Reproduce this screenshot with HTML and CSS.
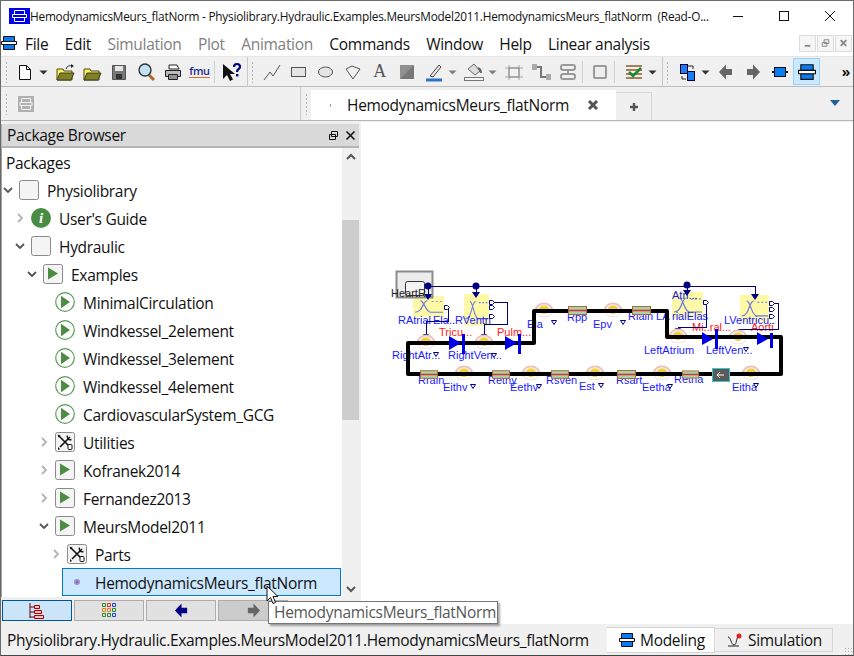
FILE: index.html
```html
<!DOCTYPE html>
<html>
<head>
  <meta charset="UTF-8">
  <title>HemodynamicsMeurs_flatNorm</title>
  <link rel="stylesheet" href="styles.css">
</head>
<body>
  <!-- shared icons -->
  <svg class="defs" width="0" height="0">
    <symbol id="i-diagram" viewBox="0 0 16 16">
      <path d="M2.500 1.500h11v5h-11zM2.500 9.500h11v5h-11z" fill="#0a7cf0" stroke="#111"/>
      <path d="M.5 6.500h15v3H.5z" fill="#fff" stroke="#111"/>
    </symbol>
    <symbol id="i-box" viewBox="0 0 20 20">
      <rect x=".5" y=".5" width="19" height="19" rx="2" fill="#f4f4f4" stroke="#8a8a8a"/>
    </symbol>
    <symbol id="i-pkgplay" viewBox="0 0 20 20">
      <rect x=".5" y=".5" width="19" height="19" rx="2" fill="#f4f4f4" stroke="#8a8a8a"/>
      <path d="M5 3.500l10 6-10 6z" fill="#4c8c43"/>
    </symbol>
    <symbol id="i-play" viewBox="0 0 20 20">
      <circle cx="10" cy="10" r="9.300" fill="#fff" stroke="#5d9c57" stroke-width="1.200"/>
      <path d="M6 3.800l9 6.200-9 6.200z" fill="#4c8c43"/>
    </symbol>
    <symbol id="i-tools" viewBox="0 0 20 20">
      <rect x=".5" y=".5" width="19" height="19" rx="2" fill="#f4f4f4" stroke="#8a8a8a"/>
      <path d="M4 4l11 11M15 5L5 15" stroke="#111" stroke-width="1.600"/>
      <path d="M12.500 3.500a3 3 0 0 0 4 4" fill="none" stroke="#111" stroke-width="1.400"/>
      <path d="M2.500 2.500l3 1-2 2z" fill="#111"/>
      <rect x="13" y="12.500" width="4" height="5" rx="1" fill="#fff" stroke="#111"/>
      <path d="M3 15l2 2-2 1z" fill="#111"/>
    </symbol>
    <symbol id="i-chev-d" viewBox="0 0 12 12">
      <path d="M2 4l4 4 4-4" fill="none" stroke="#555" stroke-width="1.800"/>
    </symbol>
    <symbol id="i-chev-r" viewBox="0 0 12 12">
      <path d="M4 2l4 4-4 4" fill="none" stroke="#b4b4b4" stroke-width="1.800"/>
    </symbol>
    <symbol id="i-drop" viewBox="0 0 12 24">
      <path d="M1.500 10.500h8l-4 4z" fill="#333"/>
    </symbol>
    <symbol id="i-folder" viewBox="0 0 24 24">
      <path d="M4 9h6l1 2h8v9H4z" fill="#f6ef6c" stroke="#4a4a10"/>
      <path d="M4 20l3-7h14l-3 7z" fill="#80802a" stroke="#3f3f10"/>
    </symbol>
    <symbol id="i-arrow-l" viewBox="0 0 16 16">
      <path d="M1 8l7-7.500V5h6v6H8v4.500z"/>
    </symbol>
    <symbol id="i-arrow-r" viewBox="0 0 16 16">
      <path d="M15 8L8 .5V5H2v6h6v4.500z"/>
    </symbol>
    <symbol id="i-pad" viewBox="0 0 20 15">
      <path d="M.5 9a9.500 8.500 0 0 1 19 0z" fill="#e8c4b8"/>
      <path d="M2.500 9a7.500 6.800 0 0 1 15 0z" fill="#fbefe9"/>
      <path d="M4 9a6 5.300 0 0 1 12 0z" fill="#e8c4b8"/>
      <path d="M5.500 9a4.500 3.800 0 0 1 9 0z" fill="#fbefe9"/>
      <path d="M6 8a4 4 0 0 0 8 0v-1.500a4 3 0 0 0-8 0z" fill="#f2d02e"/>
      <path d="M3 11a7 4 0 0 0 14 0" fill="none" stroke="#f0dcd2"/>
    </symbol>
    <symbol id="i-res" viewBox="0 0 19 9">
      <rect x=".5" y=".5" width="18" height="8" fill="#a9d3a4" stroke="#a86a3c"/>
      <path d="M1 4.500h17" stroke="#d8303a" stroke-width="1.600"/>
    </symbol>
    <symbol id="i-curve" viewBox="0 0 30 26" preserveAspectRatio="none">
      <rect width="30" height="26" fill="#fdf9a6"/>
      <path d="M2 20c8 0 7-14 12-14M7 6c4 0 5 14 10 14h12" fill="none" stroke="#6a78e0" stroke-width="1.200"/>
      <path d="M18 7h2M22 7h2M26 7h2" stroke="#6a78e0"/>
    </symbol>
    <symbol id="i-tri" viewBox="0 0 6 5">
      <path d="M.5.500h5L3 4.500z" fill="#fff" stroke="#000080"/>
    </symbol>
    <symbol id="i-out" viewBox="0 0 6 5">
      <path d="M.5.500h3l2 2-2 2h-3z" fill="#fff" stroke="#000080"/>
    </symbol>
  </svg>

  <div class="window">
    <div class="titlebar">
      <svg class="app-icon" width="21" height="16" viewBox="0 0 21 16">
        <rect width="21" height="16" fill="#0000e6"/>
        <path d="M5.500 2.500h10v4h-10zM5.500 9.500h10v4h-10zM3.500 6.500h14v3h-14z" fill="none" stroke="#fff"/>
      </svg>
      <span class="title-text">HemodynamicsMeurs_flatNorm - Physiolibrary.Hydraulic.Examples.MeursModel2011.HemodynamicsMeurs_flatNorm  (Read-O...</span>
      <div class="win-buttons">
        <svg width="46" height="30" viewBox="0 0 46 30"><path d="M18 15.500h10" stroke="#111"/></svg>
        <svg width="46" height="30" viewBox="0 0 46 30"><rect x="18.500" y="10.500" width="9" height="9" fill="none" stroke="#111"/></svg>
        <svg width="46" height="30" viewBox="0 0 46 30"><path d="M18 10l10 10M28 10L18 20" stroke="#111"/></svg>
      </div>
    </div>

    <div class="menubar">
      <svg class="menu-icon" width="16" height="16"><use href="#i-diagram"/></svg>
      <span class="menu-item">File</span>
      <span class="menu-item">Edit</span>
      <span class="menu-item off">Simulation</span>
      <span class="menu-item off">Plot</span>
      <span class="menu-item off">Animation</span>
      <span class="menu-item">Commands</span>
      <span class="menu-item">Window</span>
      <span class="menu-item">Help</span>
      <span class="menu-item">Linear analysis</span>
      <div class="mdi-buttons">
        <span class="mdi-btn"><svg width="16" height="16" viewBox="0 0 16 16"><path d="M5 11h6" stroke="#888" stroke-width="2"/></svg></span>
        <span class="mdi-btn"><svg width="16" height="16" viewBox="0 0 16 16"><path d="M6.500 4.500h5v4h-5zM4.500 7.500h5v4h-5z" fill="#eee" stroke="#888"/></svg></span>
        <span class="mdi-btn"><svg width="16" height="16" viewBox="0 0 16 16"><path d="M5 5l6 6M11 5l-6 6" stroke="#888" stroke-width="2"/></svg></span>
      </div>
    </div>

    <div class="toolbar">
      <span class="handle"></span>
      <span class="spacer-left"></span>
      <span class="tb"><svg width="24" height="24" viewBox="0 0 24 24"><path d="M6.500 5.500h7l4 4v10h-11z" fill="#fff" stroke="#111"/><path d="M13.500 5.500v4h4" fill="none" stroke="#111"/></svg></span>
      <span class="tb-drop"><svg width="12" height="24"><use href="#i-drop"/></svg></span>
      <span class="tb"><svg width="24" height="24" viewBox="0 0 24 24"><use href="#i-folder"/><path d="M13 9c1-3 4-4 6-3" fill="none" stroke="#222"/><path d="M18 4l3 2-3 2z" fill="#222"/></svg></span>
      <span class="tb"><svg width="24" height="24"><use href="#i-folder"/></svg></span>
      <span class="tb"><svg width="24" height="24" viewBox="0 0 24 24"><path d="M5.500 5.500h13v14h-13z" fill="#777" stroke="#555"/><path d="M8 6h8v5H8z" fill="#e6e6e6"/><path d="M9 14h6v5H9z" fill="#333"/></svg></span>
      <span class="tb"><svg width="24" height="24" viewBox="0 0 24 24"><path d="M15 15l5 5" stroke="#b0662a" stroke-width="3"/><circle cx="11" cy="10" r="6" fill="#bfe2f5" stroke="#333" stroke-width="1.400"/></svg></span>
      <span class="tb"><svg width="24" height="24" viewBox="0 0 24 24"><path d="M8 5h8l2 4H8z" fill="#fff" stroke="#222"/><path d="M4.500 10.500h15v6h-15z" fill="#bbb" stroke="#222"/><path d="M7.500 14.500h9v5h-9z" fill="#fff" stroke="#222"/><path d="M8 16h8M8 18h8" stroke="#222"/></svg></span>
      <span class="tb"><span class="fmu">fmu</span></span>
      <span class="tb-sep"></span>
      <span class="tb"><svg width="24" height="24" viewBox="0 0 24 24"><path d="M3 4v15l4-4 3 6 3-1.500-3-5.500h5z" fill="#111"/><path d="M14 7c0-4 6-4 6 0 0 2-3 2-3 5" fill="none" stroke="#00007a" stroke-width="2.200"/><path d="M16 14h2.400v2.400H16z" fill="#00007a"/></svg></span>
      <span class="group-end"></span>
      <span class="handle"></span>
      <span class="tb"><svg width="24" height="24" viewBox="0 0 24 24"><path d="M4 20l6-8 3 4 7-11" fill="none" stroke="#555"/></svg></span>
      <span class="tb"><svg width="24" height="24" viewBox="0 0 24 24"><rect x="4.500" y="7.500" width="14" height="9" fill="#e4e4e4" stroke="#555"/></svg></span>
      <span class="tb"><svg width="24" height="24" viewBox="0 0 24 24"><ellipse cx="11.500" cy="12" rx="7" ry="5" fill="#e4e4e4" stroke="#555"/></svg></span>
      <span class="tb"><svg width="24" height="24" viewBox="0 0 24 24"><path d="M5 9l6-3 8 3-7 10z" fill="#f0f0f0" stroke="#555"/></svg></span>
      <span class="tb tb-letter">A</span>
      <span class="tb"><svg width="24" height="24" viewBox="0 0 24 24"><rect x="5" y="5" width="14" height="14" fill="#777"/><path d="M5 5h14L5 19z" fill="#909090"/></svg></span>
      <span class="tb"><svg width="24" height="24" viewBox="0 0 24 24"><path d="M8 16l9-11 2 2-8 10z" fill="#e8e8e8" stroke="#444"/><path d="M4 20h16" stroke="#2a6fc9" stroke-width="3"/></svg></span>
      <span class="tb-drop"><svg width="12" height="24"><use href="#i-drop" opacity=".6"/></svg></span>
      <span class="tb"><svg width="24" height="24" viewBox="0 0 24 24"><path d="M6 9l6-5 6 7-5 4z" fill="#ddd" stroke="#666"/><path d="M16 8c2 1 3 3 3 5" fill="none" stroke="#666" stroke-width="2"/><rect x="2.500" y="17.500" width="19" height="3" fill="#f4f4f4" stroke="#777"/></svg></span>
      <span class="tb-drop"><svg width="12" height="24"><use href="#i-drop" opacity=".6"/></svg></span>
      <span class="tb"><svg width="24" height="24" viewBox="0 0 24 24"><path d="M7 5v15M17 5v15M3 8h18M3 17h18" stroke="#a8a8a8"/><rect x="7" y="8" width="10" height="9" fill="none" stroke="#888"/></svg></span>
      <span class="tb"><svg width="24" height="24" viewBox="0 0 24 24"><path d="M7 7h5v10h7" fill="none" stroke="#777" stroke-width="2"/><rect x="3" y="4" width="5" height="6" fill="#aaa"/><rect x="17" y="14" width="5" height="6" fill="#aaa"/></svg></span>
      <span class="tb"><svg width="24" height="24" viewBox="0 0 24 24"><rect x="5" y="5" width="14" height="5" rx="2" fill="none" stroke="#999" stroke-width="2"/><rect x="5" y="14" width="14" height="5" rx="2" fill="none" stroke="#999" stroke-width="2"/><path d="M12 10v4" stroke="#999" stroke-width="2"/></svg></span>
      <span class="tb-sep"></span>
      <span class="tb"><svg width="24" height="24" viewBox="0 0 24 24"><rect x="6" y="6" width="12" height="12" rx="1" fill="#eee" stroke="#999" stroke-width="2"/></svg></span>
      <span class="tb-sep"></span>
      <span class="tb tb-gap"><svg width="24" height="24" viewBox="0 0 24 24"><path d="M4 6h16M4 10h16M4 14h16M4 18h16" stroke="#8a5a2a" stroke-width="1.500"/><path d="M7 12l4 4 8-8" fill="none" stroke="#1b8a2a" stroke-width="2.500"/></svg></span>
      <span class="tb-drop"><svg width="12" height="24"><use href="#i-drop"/></svg></span>
      <span class="group-end"></span>
      <span class="handle"></span>
      <span class="tb"><svg width="24" height="24" viewBox="0 0 24 24"><rect x="5.500" y="4.500" width="7" height="9" fill="#1a7cf0" stroke="#003"/><rect x="12.500" y="11.500" width="7" height="9" fill="#1a7cf0" stroke="#003"/><path d="M13 6h5v3M11 19H7v-3" fill="none" stroke="#222"/></svg></span>
      <span class="tb-drop tight"><svg width="12" height="24"><use href="#i-drop"/></svg></span>
      <span class="tb tb-grey"><svg width="16" height="16"><use href="#i-arrow-l"/></svg></span>
      <span class="tb tb-grey"><svg width="16" height="16"><use href="#i-arrow-r"/></svg></span>
      <span class="tb"><svg width="24" height="24" viewBox="0 0 24 24"><rect x="6.500" y="7.500" width="11" height="9" fill="#0a7cf0" stroke="#111"/><path d="M4 12h2M18 12h2" stroke="#111" stroke-width="2"/></svg></span>
      <span class="tb tb-on"><svg width="18" height="18"><use href="#i-diagram"/></svg></span>
      <span class="tb-more">»</span>
    </div>

    <div class="tabbar">
      <div class="tabbar-left">
        <span class="handle"></span>
        <svg width="16" height="16" viewBox="0 0 16 16"><rect width="16" height="16" fill="#b0b0b0"/><path d="M3.500 2.500h9v4h-9zM3.500 9.500h9v4h-9zM2 6.500h12v3H2z" fill="none" stroke="#f2f2f2"/></svg>
      </div>
      <div class="tabbar-right">
        <span class="handle"></span>
        <div class="tab">
          <span class="tab-dot"></span>
          <span class="tab-name">HemodynamicsMeurs_flatNorm</span>
          <svg width="12" height="12" viewBox="0 0 12 12"><path d="M2 2l8 8M10 2l-8 8" stroke="#555" stroke-width="3"/></svg>
        </div>
        <div class="tab-add"><svg width="10" height="10" viewBox="0 0 10 10"><path d="M5 1v8M1 5h8" stroke="#555" stroke-width="2.400"/></svg></div>
        <svg class="tab-menu" width="10" height="6" viewBox="0 0 10 6"><path d="M0 0h10L5 6z" fill="#1f5f9e"/></svg>
      </div>
    </div>

    <div class="main">
      <div class="browser">
        <div class="browser-head">
          <span>Package Browser</span>
          <svg width="11" height="11" viewBox="0 0 11 11"><path d="M3.500 1.500h6v5h-6zM1.500 4.500h6v5h-6z" fill="#d9d9d9" stroke="#111"/></svg>
          <svg width="11" height="11" viewBox="0 0 11 11"><path d="M1.500 1.500l8 8M9.500 1.500l-8 8" stroke="#111" stroke-width="1.600"/></svg>
        </div>
        <div class="browser-body">
          <div class="tree">
            <div class="tree-head">Packages</div>
            <div class="row d0"><svg class="chev" width="12" height="12"><use href="#i-chev-d"/></svg><svg width="20" height="20"><use href="#i-box"/></svg><span>Physiolibrary</span></div>
            <div class="row d1"><svg class="chev" width="12" height="12"><use href="#i-chev-r"/></svg><svg width="20" height="20" viewBox="0 0 20 20"><circle cx="10" cy="10" r="10" fill="#4a8c44"/><text x="10" y="15" class="info-i">i</text></svg><span>User's Guide</span></div>
            <div class="row d1"><svg class="chev" width="12" height="12"><use href="#i-chev-d"/></svg><svg width="20" height="20"><use href="#i-box"/></svg><span>Hydraulic</span></div>
            <div class="row d2"><svg class="chev" width="12" height="12"><use href="#i-chev-d"/></svg><svg width="20" height="20"><use href="#i-pkgplay"/></svg><span>Examples</span></div>
            <div class="row d3"><span class="chev"></span><svg width="20" height="20"><use href="#i-play"/></svg><span>MinimalCirculation</span></div>
            <div class="row d3"><span class="chev"></span><svg width="20" height="20"><use href="#i-play"/></svg><span>Windkessel_2element</span></div>
            <div class="row d3"><span class="chev"></span><svg width="20" height="20"><use href="#i-play"/></svg><span>Windkessel_3element</span></div>
            <div class="row d3"><span class="chev"></span><svg width="20" height="20"><use href="#i-play"/></svg><span>Windkessel_4element</span></div>
            <div class="row d3"><span class="chev"></span><svg width="20" height="20"><use href="#i-play"/></svg><span>CardiovascularSystem_GCG</span></div>
            <div class="row d3"><svg class="chev" width="12" height="12"><use href="#i-chev-r"/></svg><svg width="20" height="20"><use href="#i-tools"/></svg><span>Utilities</span></div>
            <div class="row d3"><svg class="chev" width="12" height="12"><use href="#i-chev-r"/></svg><svg width="20" height="20"><use href="#i-pkgplay"/></svg><span>Kofranek2014</span></div>
            <div class="row d3"><svg class="chev" width="12" height="12"><use href="#i-chev-r"/></svg><svg width="20" height="20"><use href="#i-pkgplay"/></svg><span>Fernandez2013</span></div>
            <div class="row d3"><svg class="chev" width="12" height="12"><use href="#i-chev-d"/></svg><svg width="20" height="20"><use href="#i-pkgplay"/></svg><span>MeursModel2011</span></div>
            <div class="row d4"><svg class="chev" width="12" height="12"><use href="#i-chev-r"/></svg><svg width="20" height="20"><use href="#i-tools"/></svg><span>Parts</span></div>
            <div class="row-selected"><svg width="20" height="20" viewBox="0 0 20 20"><circle cx="10" cy="10" r="3" fill="#8c94dc"/><circle cx="10" cy="10" r="1.200" fill="#d04a7a"/></svg><span>HemodynamicsMeurs_flatNorm</span></div>
          </div>
          <div class="scrollbar">
            <svg width="16" height="16" viewBox="0 0 16 16"><path d="M4 10l4-4 4 4" fill="none" stroke="#555" stroke-width="2"/></svg>
            <div class="scroll-track"><div class="scroll-thumb"></div></div>
            <svg width="16" height="16" viewBox="0 0 16 16"><path d="M4 6l4 4 4-4" fill="none" stroke="#555" stroke-width="2"/></svg>
          </div>
        </div>
        <div class="browser-foot">
          <span class="foot-btn on"><svg width="20" height="18" viewBox="0 0 20 18"><path d="M3 1v15M3 5h4M3 10h4M3 15h4" stroke="#600" fill="none"/><path d="M7.500 3.500h5v3h-5zM7.500 8.500h7v3h-7zM7.500 13.500h9v3h-9z" fill="#f4c4c4" stroke="#a00"/></svg></span>
          <span class="foot-btn"><svg width="15" height="15" viewBox="0 0 15 15"><path d="M.5.500h3v3h-3z" fill="none" stroke="#2a8a2a"/><path d="M5.500.500h3v3h-3z" fill="none" stroke="#e03030"/><path d="M10.500.500h3v3h-3z" fill="none" stroke="#2040e0"/><path d="M.5 5.500h3v3h-3z" fill="none" stroke="#e08020"/><path d="M5.500 5.500h3v3h-3z" fill="none" stroke="#e08020"/><path d="M10.500 5.500h3v3h-3z" fill="none" stroke="#2a8a2a"/><path d="M.5 10.500h3v3h-3z" fill="none" stroke="#2a8a2a"/><path d="M5.500 10.500h3v3h-3z" fill="none" stroke="#2a8a2a"/><path d="M10.500 10.500h3v3h-3z" fill="none" stroke="#2040e0"/></svg></span>
          <span class="foot-btn back"><svg width="15" height="15"><use href="#i-arrow-l"/></svg></span>
          <span class="foot-btn dim"><svg width="15" height="15"><use href="#i-arrow-r"/></svg></span>
        </div>
      </div>

      <div class="canvas">
        <svg class="diagram" width="493" height="504" viewBox="361 121 493 504">
          <!-- elastance blocks -->
          <use href="#i-curve" x="413" y="295" width="31" height="21"/>
          <use href="#i-curve" x="464" y="293" width="25" height="32"/>
          <use href="#i-curve" x="672" y="291" width="31" height="26"/>
          <use href="#i-curve" x="740" y="294" width="29" height="27"/>

          <!-- labels sit under the wires -->
          <g class="lbl-red">
            <text x="439" y="335">Tricu...</text><text x="497" y="335">Pulm...</text>
            <text x="692" y="330">Mi..ral...</text><text x="751" y="330">Aorti</text>
          </g>
          <g class="lbl">
            <text x="398" y="323">RAtrial</text><text x="433" y="323">Ela..</text><text x="452" y="323">.RVentri</text>
            <text x="527" y="327">Ela</text><text x="567" y="320">Rpp</text>
            <text x="392" y="358">RightAtr...</text><text x="448" y="358">RightVen...</text>
            <text x="418" y="383">Rrain</text><text x="443" y="390">Eithv</text>
            <text x="488" y="383">Rethy</text><text x="510" y="390">Eethv</text>
            <text x="546" y="383">Rsven</text><text x="579" y="389">Est</text>
            <text x="593" y="327">Epv</text><text x="628" y="319">Rlain LA</text>
            <text x="672" y="298">Atri...</text><text x="672" y="319">rialElas</text>
            <text x="724" y="323">LVentricu..</text>
            <text x="644" y="353">LeftAtrium</text><text x="706" y="353">LeftVen...</text>
            <text x="616" y="383">Rsart</text><text x="642" y="390">Eetha</text>
            <text x="674" y="382">Retha</text><text x="732" y="390">Eitha</text>
          </g>

          <!-- heart rate source -->
          <rect class="hr-box" x="396.500" y="270.500" width="36" height="26"/>
          <rect class="hr-inner" x="405.500" y="280.500" width="19" height="14" rx="2"/>
          <text class="hr-label" x="391" y="296">HeartR..</text>

          <!-- signal lines -->
          <path class="sig" d="M428 285H755V295M428 285V295M476 285V293M687 285V292"/>
          <path class="sig" d="M444 306H448V320H426V335M489 301H507V323H484V335M703 300H706V326H678V330M769 302H778V328H738V332"/>
          <circle class="node" cx="428" cy="285" r="3.500"/>
          <circle class="node" cx="476" cy="285" r="3.500"/>
          <circle class="node" cx="687" cy="284" r="3.500"/>
          <path class="node" d="M424 293h8l-4 6zM472 291h8l-4 6zM683 289h8l-4 6zM751 293h8l-4 6zM423 333h6l-3 4zM481 333h6l-3 4zM675 327h6l-3 4zM735 329h6l-3 4z"/>
          <use href="#i-out" x="444" y="304" width="6" height="5"/>
          <use href="#i-out" x="489" y="299" width="6" height="5"/>
          <use href="#i-out" x="489" y="304" width="6" height="5"/>
          <use href="#i-out" x="489" y="313" width="6" height="5"/>
          <use href="#i-out" x="703" y="299" width="6" height="5"/>
          <use href="#i-out" x="769" y="300" width="6" height="5"/>
          <use href="#i-out" x="769" y="306" width="6" height="5"/>
          <use href="#i-out" x="769" y="313" width="6" height="5"/>

          <!-- pressure chambers -->
          <use href="#i-pad" x="416" y="333" width="20" height="15"/>
          <use href="#i-pad" x="474" y="333" width="20" height="15"/>
          <use href="#i-pad" x="534" y="301" width="20" height="15"/>
          <use href="#i-pad" x="603" y="301" width="20" height="15"/>
          <use href="#i-pad" x="668" y="327" width="20" height="15"/>
          <use href="#i-pad" x="728" y="328" width="20" height="15"/>
          <use href="#i-pad" x="454" y="364" width="20" height="15"/>
          <use href="#i-pad" x="521" y="364" width="20" height="15"/>
          <use href="#i-pad" x="585" y="364" width="20" height="15"/>
          <use href="#i-pad" x="652" y="364" width="20" height="15"/>
          <use href="#i-pad" x="741" y="364" width="20" height="15"/>

          <!-- main flow line -->
          <path class="flow" d="M408 373V342H534V310H667V336H781V373Z"/>

          <!-- resistors and valves -->
          <use href="#i-res" x="420" y="369" width="18" height="9"/>
          <use href="#i-res" x="492" y="369" width="18" height="9"/>
          <use href="#i-res" x="551" y="369" width="18" height="9"/>
          <use href="#i-res" x="568" y="305" width="19" height="9"/>
          <use href="#i-res" x="632" y="305" width="19" height="9"/>
          <use href="#i-res" x="617" y="369" width="19" height="9"/>
          <use href="#i-res" x="682" y="369" width="17" height="9"/>
          <path class="valve" d="M449 335l12 7-12 7zM505 335l12 7-12 7zM702 331l11 7-11 6zM757 331l11 7-11 6z"/>
          <rect class="valve" x="462" y="333" width="3" height="20"/>
          <rect class="valve" x="518" y="333" width="3" height="20"/>
          <rect class="valve" x="715" y="328" width="3" height="20"/>
          <rect class="valve" x="770" y="332" width="3" height="15"/>
          <rect class="backflow" x="712.500" y="367.500" width="17" height="13"/>
          <path d="M724 374h-7m3-3l-3 3 3 3" fill="none" stroke="#fff"/>

          <!-- connector triangles -->
          <use href="#i-tri" x="433" y="351" width="6" height="5"/>
          <use href="#i-tri" x="491" y="352" width="6" height="5"/>
          <use href="#i-tri" x="551" y="319" width="6" height="5"/>
          <use href="#i-tri" x="620" y="319" width="6" height="5"/>
          <use href="#i-tri" x="470" y="383" width="6" height="5"/>
          <use href="#i-tri" x="536" y="383" width="6" height="5"/>
          <use href="#i-tri" x="598" y="382" width="6" height="5"/>
          <use href="#i-tri" x="667" y="383" width="6" height="5"/>
          <use href="#i-tri" x="753" y="382" width="6" height="5"/>
          <use href="#i-tri" x="743" y="346" width="6" height="5"/>
        </svg>
      </div>
    </div>

    <div class="statusbar">
      <span class="status-text">Physiolibrary.Hydraulic.Examples.MeursModel2011.HemodynamicsMeurs_flatNorm</span>
      <div class="mode-tab active"><svg width="16" height="16"><use href="#i-diagram"/></svg>Modeling</div>
      <div class="mode-tab"><svg width="16" height="16" viewBox="0 0 16 16"><path d="M1 5c3 0 3 8 6 8s2-8 5-9" fill="none" stroke="#222"/><path d="M1 14h11" stroke="#222"/><circle cx="12" cy="4" r="2.500" fill="#e02020"/></svg>Simulation</div>
      <span class="grip"></span>
    </div>

    <!-- things floating over the window -->
    <div class="tooltip">HemodynamicsMeurs_flatNorm</div>
    <svg class="cursor" width="14" height="20" viewBox="0 0 14 20"><path d="M1 1v15l3.500-3.500 2.500 6 2.500-1-2.500-6H12z" fill="#fff" stroke="#111"/></svg>
  </div>
</body>
</html>
```

FILE: styles.css
```css
* {
  box-sizing: border-box;
}
html, body {
  margin: 0;
  padding: 0;
}
body {
  font-family: "Open Sans", "Noto Sans", sans-serif;
  font-size: 15.500px;
  letter-spacing: -0.3px;
  color: #111;
  overflow: hidden;
}
.defs {
  position: absolute;
}
.window {
  position: relative;
  width: 854px;
  height: 656px;
  display: flex;
  flex-direction: column;
  background-color: #f0f0f0;
  border: 1px solid #6a6a6a;
  border-bottom-color: #444;
  overflow: hidden;
}

/* title and menu */
.titlebar {
  height: 29px;
  flex: none;
  display: flex;
  align-items: center;
  padding-left: 8px;
  background-color: #fff;
}
.app-icon {
  flex: none;
}
.title-text {
  font-size: 11.800px;
  letter-spacing: -0.22px;
  white-space: pre;
}
.win-buttons {
  margin-left: auto;
  display: flex;
  flex: none;
}
.menubar {
  height: 26px;
  flex: none;
  display: flex;
  align-items: center;
  background-color: #fff;
}
.menu-icon {
  flex: none;
}
.menu-item {
  margin-left: 16.400px;
  padding-top: 2px;
}
.menu-icon + .menu-item {
  margin-left: 8px;
}
.menu-item.off {
  color: #808080;
}
.mdi-buttons {
  margin-left: auto;
  margin-right: 1px;
  display: flex;
  gap: 1px;
}
.mdi-btn {
  width: 17px;
  height: 17px;
  display: flex;
  align-items: center;
  justify-content: center;
  background-color: #f6f6f6;
  border: 1px solid #dcdcdc;
}

/* toolbars */
.toolbar {
  height: 31px;
  flex: none;
  display: flex;
  align-items: center;
  padding-left: 4px;
  border-bottom: 1px solid #bdbdbd;
  border-top: 1px solid #e6e6e6;
}
.handle {
  width: 3px;
  height: 22px;
  flex: none;
  background-image: radial-gradient(#b0b0b0 1px, transparent 1px);
  background-size: 3px 4px;
}
.spacer-left {
  width: 3px;
}
.tb {
  width: 27px;
  height: 27px;
  flex: none;
  display: flex;
  align-items: center;
  justify-content: center;
}
.tb-gap {
  margin-left: 2px;
}
.tb-grey {
  fill: #666;
}
.tb-drop {
  width: 12px;
  height: 24px;
  flex: none;
  margin-right: 1px;
}
.tb-drop.tight {
  margin-right: 0;
}
.tb-sep {
  width: 3px;
  height: 22px;
  flex: none;
  margin: 0 1px;
  border-left: 1px solid #d2d2d2;
}
.group-end {
  width: 1px;
  height: 30px;
  flex: none;
  margin: 0 3px 0 2px;
  background-color: #c8c8c8;
}
.group-end + .handle {
  margin-right: 4px;
}
.tb-on {
  background-color: #cce8ff;
  border: 1px solid #99d1ff;
}
.tb-letter {
  font-family: "Liberation Serif", serif;
  font-size: 18px;
  color: #555;
}
.tb-more {
  margin-left: auto;
  margin-right: 3px;
  font-size: 14px;
  font-weight: 700;
}
.fmu {
  font-size: 11px;
  font-weight: 600;
  color: #1c2a8c;
  border-bottom: 1px solid #d8702a;
  line-height: 10px;
  padding-bottom: 1px;
}
.tabbar {
  height: 34px;
  flex: none;
  display: flex;
  border-bottom: 1px solid #b5b5b5;
}
.tabbar-left {
  width: 300px;
  flex: none;
  display: flex;
  align-items: center;
  gap: 10px;
  padding-left: 4px;
  border-right: 1px solid #c8c8c8;
}
.tabbar-right {
  flex: 1;
  display: flex;
  align-items: flex-end;
  padding-left: 4px;
  position: relative;
}
.tabbar-right .handle {
  align-self: center;
  margin-right: 3px;
}
.tab {
  width: 305px;
  height: 30px;
  display: flex;
  align-items: center;
  padding-right: 17px;
  background-color: #fff;
}
.tab-dot {
  width: 1px;
  height: 3px;
  margin-left: 19px;
  margin-right: 16px;
  background-color: #b08ab0;
}
.tab-name {
  flex: 1;
}
.tab-add {
  width: 36px;
  height: 28px;
  display: flex;
  align-items: center;
  justify-content: center;
  border-top: 1px solid #d8d8d8;
  border-right: 1px solid #d8d8d8;
}
.tab-menu {
  position: absolute;
  right: 13px;
  top: 13px;
}

/* main area */
.main {
  flex: 1;
  min-height: 0;
  display: flex;
  padding-top: 1px;
}
.browser {
  width: 358px;
  flex: none;
  display: flex;
  flex-direction: column;
  margin-top: 2px;
  margin-right: 2px;
}
.browser-head {
  height: 24px;
  flex: none;
  display: flex;
  align-items: center;
  gap: 6px;
  padding: 0 3px 0 5px;
  background-color: #d9d9d9;
  border-bottom: 2px solid #b4b4b4;
  border-left: 1px solid #b4b4b4;
}
.browser-head span {
  flex: 1;
}
.browser-body {
  flex: 1;
  min-height: 0;
  display: flex;
  background-color: #fff;
  border-left: 1px solid #a0a0a0;
}
.tree {
  flex: 1;
  min-width: 0;
}
.tree-head {
  height: 28px;
  line-height: 30px;
  padding-left: 4px;
}
.row {
  height: 28px;
  display: flex;
  align-items: center;
}
.row svg {
  flex: none;
}
.chev {
  width: 12px;
  flex: none;
  margin-right: 5px;
}
.row span:last-child {
  margin-left: 8px;
  padding-top: 2px;
}
.d0 { padding-left: 0; }
.d1 { padding-left: 12px; }
.d2 { padding-left: 24px; }
.d3 { padding-left: 36px; }
.d4 { padding-left: 48px; }
.row-selected {
  height: 28px;
  margin-left: 60px;
  margin-right: 1px;
  display: flex;
  align-items: center;
  padding-left: 4px;
  background-color: #cce8ff;
  border: 1px solid #0078d7;
}
.row-selected span {
  margin-left: 8px;
  padding-top: 2px;
}
.scrollbar {
  width: 17px;
  flex: none;
  display: flex;
  flex-direction: column;
  align-items: center;
  padding-top: 1px;
  background-color: #f0f0f0;
}
.scroll-track {
  flex: 1;
  width: 100%;
  padding-top: 55px;
}
.scroll-thumb {
  height: 200px;
  background-color: #cdcdcd;
}
.browser-foot {
  height: 27px;
  flex: none;
  display: flex;
  gap: 2px;
  align-items: center;
  padding-left: 1px;
}
.foot-btn {
  width: 70px;
  height: 21px;
  display: flex;
  align-items: center;
  justify-content: center;
  background-color: #e1e1e1;
  border: 1px solid #adadad;
}
.foot-btn.on {
  background-color: #cce4f7;
  border-color: #005499;
}
.foot-btn.back {
  fill: #000080;
}
.foot-btn.dim {
  fill: #666;
  background-color: #cccccc;
}
.canvas {
  flex: 1;
  min-width: 0;
  background-color: #fff;
}
.diagram {
  display: block;
}

/* diagram */
.diagram text {
  font-family: "Liberation Sans", Arial, sans-serif;
  font-size: 11px;
  letter-spacing: 0;
}
.lbl text {
  fill: #1a1aff;
}
.lbl-red text {
  fill: #ff2020;
}
.hr-box {
  fill: #ececec;
  stroke: #8c8c8c;
  stroke-width: 2;
}
.hr-inner {
  fill: #f4f4f4;
  stroke: #333;
}
.diagram .hr-label {
  fill: #222;
}
.sig {
  fill: none;
  stroke: #000080;
  stroke-width: 1;
  shape-rendering: crispEdges;
}
.node {
  fill: #000080;
}
.flow {
  fill: none;
  stroke: #000;
  stroke-width: 4;
  stroke-linejoin: round;
}
.valve {
  fill: #0000e6;
}
.backflow {
  fill: #5a5a5a;
  stroke: #36c8d0;
}
.info-i {
  fill: #fff;
  font-family: "Liberation Serif", serif;
  font-size: 15px;
  font-style: italic;
  font-weight: 700;
  text-anchor: middle;
}

/* status bar */
.statusbar {
  height: 31px;
  flex: none;
  display: flex;
  align-items: center;
  padding-left: 6px;
}
.status-text {
  width: 600px;
  flex: none;
  white-space: nowrap;
}
.mode-tab {
  width: 118px;
  height: 24px;
  flex: none;
  display: flex;
  align-items: center;
  gap: 5px;
  padding-left: 12px;
  border: 1px solid #d6d6d6;
  border-left: none;
}
.mode-tab.active {
  width: 108px;
  height: 26px;
  background-color: #fff;
}
.grip {
  width: 8px;
  height: 8px;
  margin-left: auto;
  margin-right: 1px;
  align-self: flex-end;
  background-image: radial-gradient(#b0b0b0 1px, transparent 1px);
  background-size: 3px 3px;
}

/* overlays */
.tooltip {
  position: absolute;
  left: 267px;
  top: 600px;
  width: 230px;
  height: 23px;
  padding-left: 5px;
  line-height: 21px;
  color: #575757;
  background-color: #fff;
  border: 1px solid #767676;
  box-shadow: 2px 2px 2px rgba(0, 0, 0, 0.35);
}
.cursor {
  position: absolute;
  left: 265px;
  top: 584px;
}
```
